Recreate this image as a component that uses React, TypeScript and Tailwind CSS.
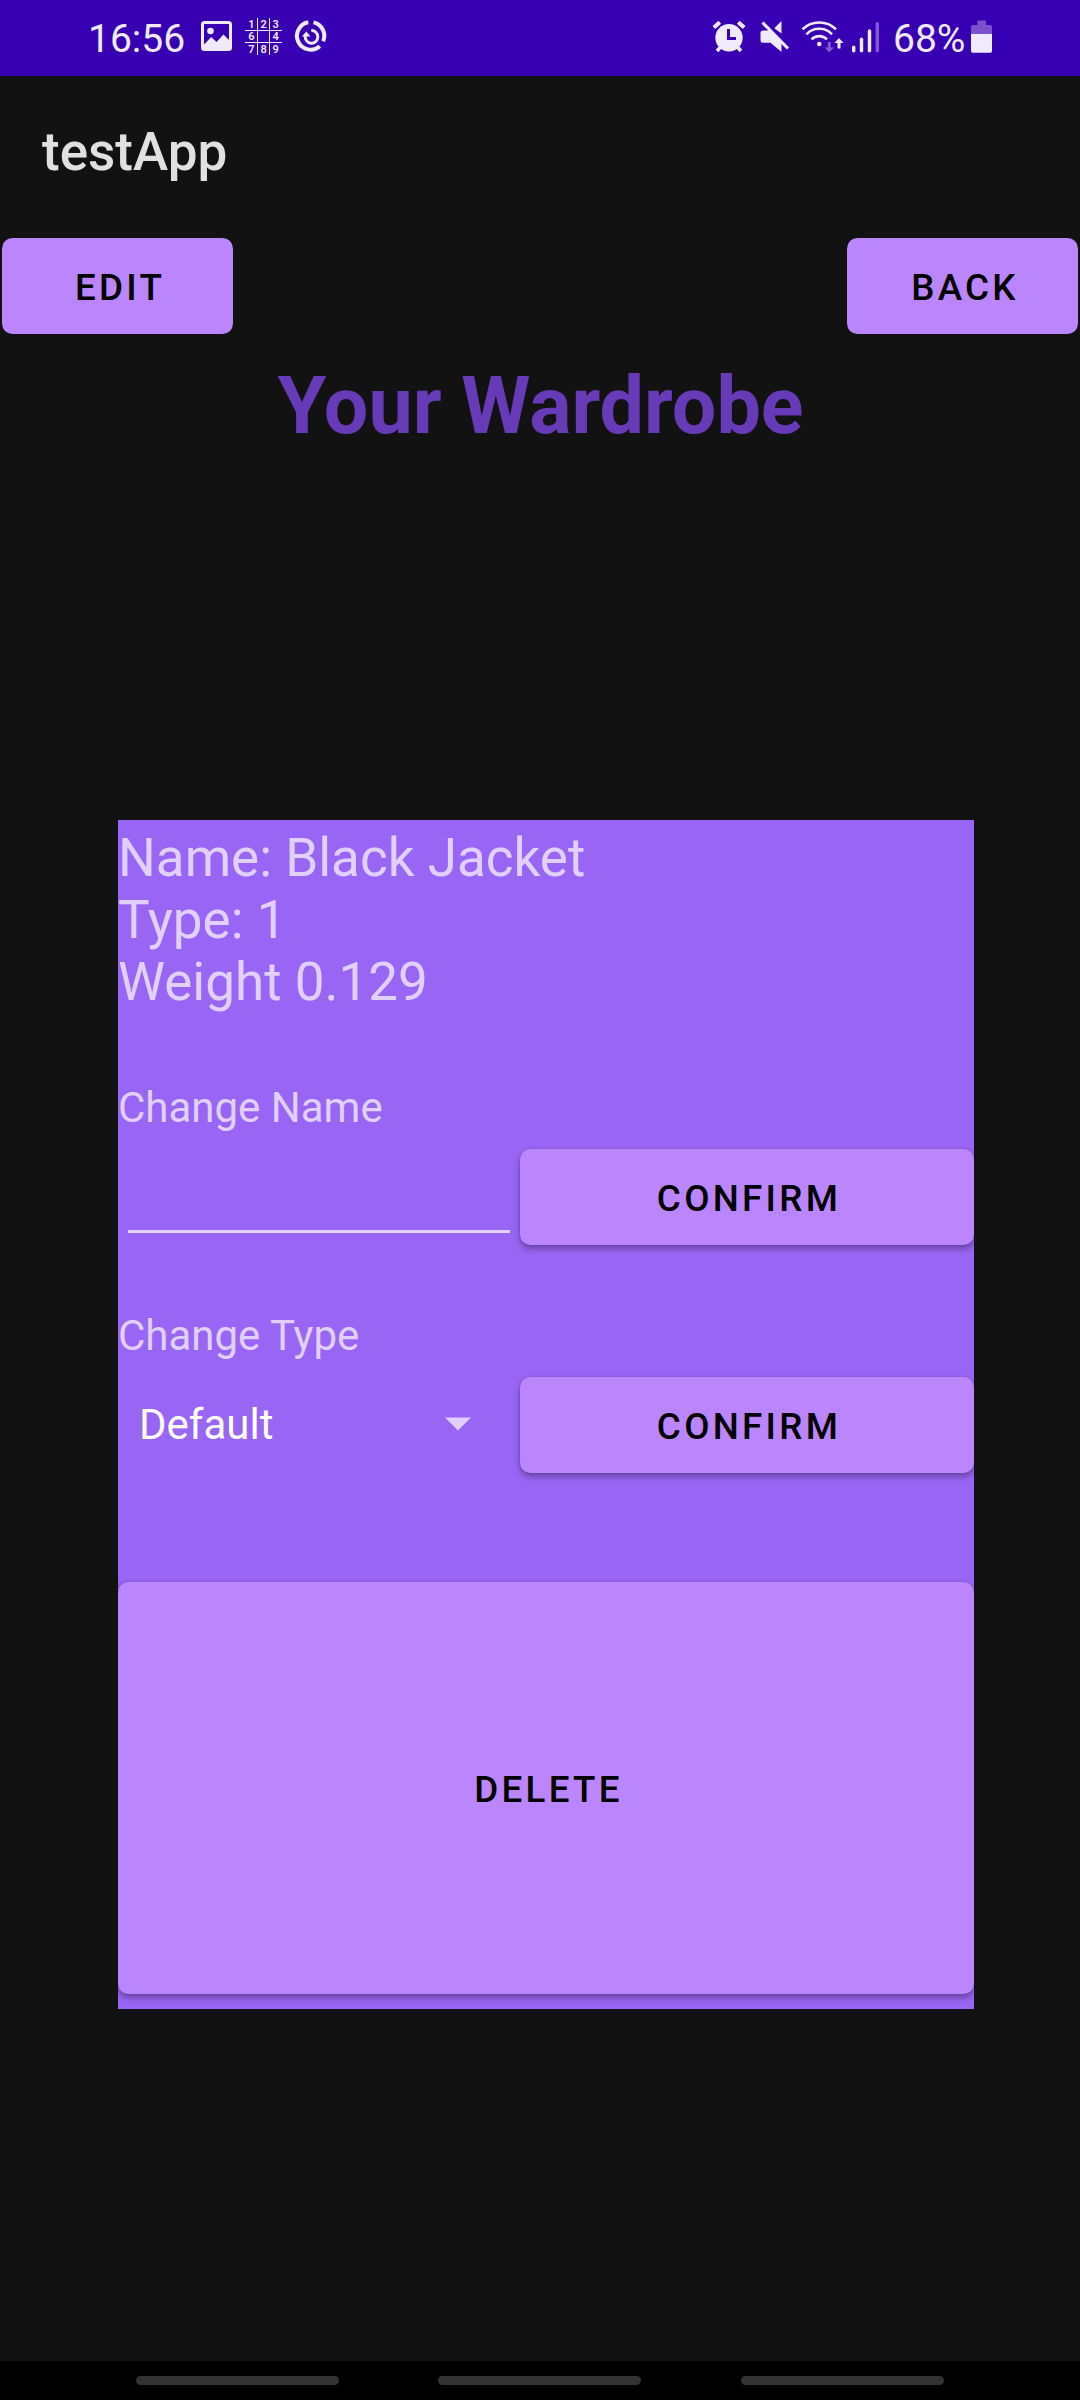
import React from "react";

const INK = "#f1eafd";
const DIM = "#8259d3";

/* Each status icon is drawn in the coordinate space of the bar itself. */
function StatusIcon({ x, w, children }: { x: number; w: number; children: React.ReactNode }) {
  return (
    <svg width={w} height={76} viewBox={`${x} 0 ${w} 76`} fill={INK} className="block shrink-0">
      {children}
    </svg>
  );
}

const CELLS: [string, number, number][] = [
  ["1", 251.3, 27.8], ["2", 263.6, 27.8], ["3", 275.7, 27.8],
  ["6", 251.3, 40.4], ["4", 275.7, 40.4],
  ["7", 251.3, 53], ["8", 263.6, 53], ["9", 275.7, 53],
];

function StatusBar() {
  return (
    <div className="flex h-[76px] items-center bg-[#3700b3] text-[#f1eafd]">
      <span className="ml-[88px] w-[112px] pt-[2px] text-[39px] leading-[76px] whitespace-nowrap">16:56</span>
      <StatusIcon x={200} w={44}>
        <path
          fillRule="evenodd"
          d="M204.5 21H228.5A3.5 3.5 0 0 1 232 24.500V47.500A3.500 3.500 0 0 1 228.500 51H204.500A3.500 3.500 0 0 1 201 47.500V24.500A3.500 3.500 0 0 1 204.500 21ZM204 24V44.500L211.300 37L216.500 42L223.500 34.500L229 40V24Z"
        />
        <circle cx="210.500" cy="31" r="3.300" />
      </StatusIcon>
      <StatusIcon x={244} w={49}>
        <path d="M257.500 18V55M269.500 18V55M245 30.500H282M245 42.500H282" stroke={INK} strokeWidth="1" fill="none" />
        {CELLS.map(([d, cx, y]) => (
          <text key={d} x={cx} y={y} textAnchor="middle" fontSize="11" fontWeight="600">
            {d}
          </text>
        ))}
      </StatusIcon>
      <StatusIcon x={293} w={418}>
        <g fill="none" stroke={INK}>
          <path d="M308.300 22.300A13.800 13.800 0 1 0 319.800 46.300" strokeWidth="4" />
          <path d="M313.500 22.400A13.800 13.800 0 0 1 323.200 41.200" strokeWidth="4" />
          <path d="M311.300 30.600A6.300 6.300 0 1 1 305.300 36" strokeWidth="3" />
        </g>
        <path d="M301.800 36.500L306.300 31.500L310.500 36.500Z" />
      </StatusIcon>
      <StatusIcon x={711} w={48}>
        <g stroke={INK} strokeWidth="4">
          <path d="M713.800 27.500L719.800 22.200M744.200 27.500L738.200 22.200" />
          <path d="M720.500 47L717 51M737.500 47L741 51" strokeWidth="3.500" />
        </g>
        <circle cx="729" cy="37.800" r="13.700" />
        <path d="M728.500 29V38.500H736" fill="none" stroke="#3700b3" strokeWidth="3" />
      </StatusIcon>
      <StatusIcon x={759} w={42}>
        <path d="M763 30.500H770.500L781.500 42V52L770.500 42.700H763A2.500 2.500 0 0 1 760.500 40.200V33A2.500 2.500 0 0 1 763 30.500Z" />
        <path d="M781.500 21V33.500L774.300 28.200Z" />
        <path d="M762.500 22.500L788 48.500" stroke={INK} strokeWidth="3.200" />
      </StatusIcon>
      <StatusIcon x={801} w={49}>
        <g fill="none" stroke={INK} strokeWidth="2.600">
          <path d="M802.500 29.300A24 24 0 0 1 836 29.300" />
          <path d="M806.500 34.300A17.500 17.500 0 0 1 832 34.300" />
          <path d="M811.500 39.300A11 11 0 0 1 827 39.300" />
        </g>
        <circle cx="819.300" cy="44" r="2.300" />
        <path d="M827.800 42H830.800V47.500H834L829.300 52.300L824.600 47.500H827.800Z" fill={DIM} />
        <path d="M837.500 48.500H840.500V43H843.500L839 38L834.500 43H837.500Z" />
      </StatusIcon>
      <StatusIcon x={850} w={43}>
        <rect x="852" y="45.500" width="3.400" height="7" rx="1.700" />
        <rect x="859.800" y="37.500" width="3.400" height="15" rx="1.700" />
        <rect x="867.800" y="29.300" width="3.400" height="23.200" rx="1.700" />
        <rect x="875.600" y="22" width="3.400" height="30.500" rx="1.700" fill={DIM} />
      </StatusIcon>
      <span className="w-[77px] pt-[2px] text-[39px] leading-[76px] whitespace-nowrap">68%</span>
      <StatusIcon x={970} w={24}>
        <path d="M977.500 20.500H986V25H990.500A1.700 1.700 0 0 1 992 26.700V34H971V26.700A1.700 1.700 0 0 1 972.700 25H977.500Z" fill="#7a50cc" />
        <path d="M971 34H992V51A1.700 1.700 0 0 1 990.300 52.700H972.700A1.700 1.700 0 0 1 971 51Z" />
      </StatusIcon>
    </div>
  );
}

function Button({ label, className }: { label: string; className: string }) {
  return (
    <button
      className={`flex items-center justify-center rounded-[10.500px] bg-[#bb86fc] pt-[3px] text-[36.75px] leading-[44px] font-medium tracking-[3.28px] text-black ${className}`}
    >
      {label}
    </button>
  );
}

const RAISED = "shadow-[0_4px_6px_rgba(0,0,0,0.3),0_0_3px_rgba(0,0,0,0.14)]";

export default function App() {
  return (
    <div className="flex h-[2400px] w-[1080px] flex-col overflow-hidden bg-[#121212] font-['Roboto',sans-serif]">
      <StatusBar />
      <header className="flex h-[151px] items-center pl-[42px] text-[53px] leading-[62px] font-medium text-[#e0e0e0]">
        testApp
      </header>
      <div className="mt-[11px] flex h-24 justify-between px-[2px]">
        <Button label="EDIT" className="w-[231px] pl-[5px]" />
        <Button label="BACK" className="w-[231px] pl-[5px]" />
      </div>
      <h1 className="mt-[25px] pl-px text-center text-[79px] leading-[94px] font-bold text-[#673ab7]">Your Wardrobe</h1>

      <main className="mt-[367px] ml-[118px] flex h-[1189px] w-[856px] flex-col overflow-hidden bg-[#9965f4] pt-[7px] text-[#e1cffc]">
        <div className="text-[53px] leading-[62px]">
          <p>Name: Black Jacket</p>
          <p>Type: 1</p>
          <p>Weight 0.129</p>
        </div>
        <label className="mt-[70px] text-[42px] leading-[50px]">Change Name</label>
        <div className="mt-[16px] flex h-24">
          <input className="mt-[10px] mr-[10px] ml-[10px] h-[74px] w-[382px] border-b-[3px] border-[#e1cffc] bg-transparent outline-none" />
          <Button label="CONFIRM" className={`w-[454px] pl-[4px] ${RAISED}`} />
        </div>
        <label className="mt-[66px] text-[42px] leading-[50px]">Change Type</label>
        <div className="mt-[16px] flex h-24">
          <div className="flex w-[402px] items-center justify-between pr-[49px] pb-px pl-[21px] text-[42px] leading-[49px] text-white">
            Default
            <svg width="26" height="14" viewBox="0 0 26 14" className="-mt-px">
              <path d="M0 0.500H26L13 13.500Z" fill="#e1cffc" />
            </svg>
          </div>
          <Button label="CONFIRM" className={`w-[454px] pl-[4px] ${RAISED}`} />
        </div>
        <Button label="DELETE" className={`mt-[109px] h-[412px] w-full pl-[5px] ${RAISED}`} />
      </main>

      <nav className="mt-auto flex h-[39px] items-center bg-black pl-[136px]">
        <span className="h-[9px] w-[203px] rounded-full bg-[#333]" />
        <span className="ml-[99px] h-[9px] w-[203px] rounded-full bg-[#333]" />
        <span className="ml-[100px] h-[9px] w-[203px] rounded-full bg-[#333]" />
      </nav>
    </div>
  );
}
